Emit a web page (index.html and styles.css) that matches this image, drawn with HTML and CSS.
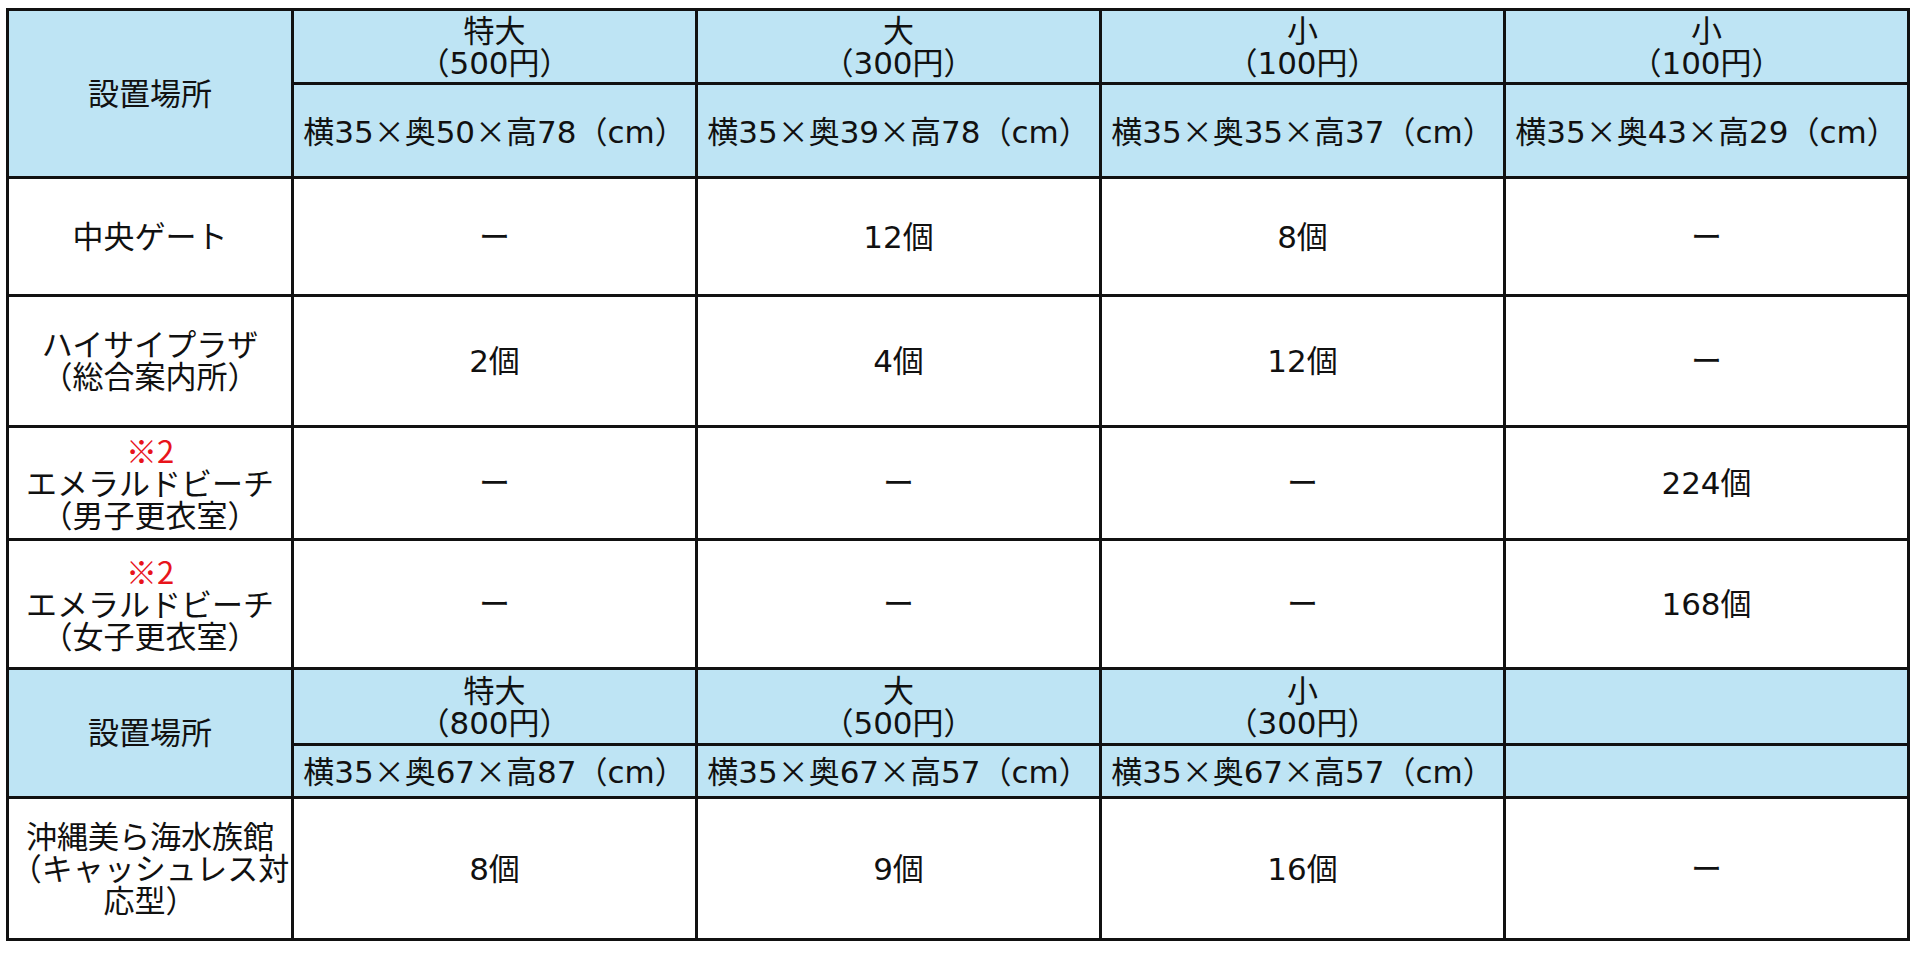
FILE: index.html
```html
<!DOCTYPE html>
<html lang="ja">
<head>
<meta charset="utf-8">
<title>コインロッカー設置場所</title>
<link rel="stylesheet" href="styles.css">
</head>
<body>
<table class="locker">
  <colgroup>
    <col class="c-place">
    <col class="c-size">
    <col class="c-size">
    <col class="c-size">
    <col class="c-size">
  </colgroup>
  <tbody>
    <tr class="h-a">
      <th class="hd" rowspan="2">設置場所</th>
      <th class="hd price">特大<br>（500円）</th>
      <th class="hd price">大<br>（300円）</th>
      <th class="hd price">小<br>（100円）</th>
      <th class="hd price">小<br>（100円）</th>
    </tr>
    <tr class="h-b">
      <th class="hd">横35<span class="x">×</span>奥50<span class="x">×</span>高78（cm）</th>
      <th class="hd">横35<span class="x">×</span>奥39<span class="x">×</span>高78（cm）</th>
      <th class="hd">横35<span class="x">×</span>奥35<span class="x">×</span>高37（cm）</th>
      <th class="hd">横35<span class="x">×</span>奥43<span class="x">×</span>高29（cm）</th>
    </tr>
    <tr class="r1">
      <td>中央ゲート</td>
      <td>ー</td>
      <td>12個</td>
      <td>8個</td>
      <td>ー</td>
    </tr>
    <tr class="r2">
      <td>ハイサイプラザ<br>（総合案内所）</td>
      <td>2個</td>
      <td>4個</td>
      <td>12個</td>
      <td>ー</td>
    </tr>
    <tr class="r3">
      <td><span class="note">※2</span><br>エメラルドビーチ<br>（男子更衣室）</td>
      <td>ー</td>
      <td>ー</td>
      <td>ー</td>
      <td>224個</td>
    </tr>
    <tr class="r4">
      <td><span class="note">※2</span><br>エメラルドビーチ<br>（女子更衣室）</td>
      <td>ー</td>
      <td>ー</td>
      <td>ー</td>
      <td>168個</td>
    </tr>
    <tr class="h2-a">
      <th class="hd" rowspan="2">設置場所</th>
      <th class="hd price">特大<br>（800円）</th>
      <th class="hd price">大<br>（500円）</th>
      <th class="hd price">小<br>（300円）</th>
      <th class="hd"></th>
    </tr>
    <tr class="h2-b">
      <th class="hd">横35<span class="x">×</span>奥67<span class="x">×</span>高87（cm）</th>
      <th class="hd">横35<span class="x">×</span>奥67<span class="x">×</span>高57（cm）</th>
      <th class="hd">横35<span class="x">×</span>奥67<span class="x">×</span>高57（cm）</th>
      <th class="hd"></th>
    </tr>
    <tr class="r5">
      <td>沖縄美ら海水族館<br>（キャッシュレス対<br>応型）</td>
      <td>8個</td>
      <td>9個</td>
      <td>16個</td>
      <td>ー</td>
    </tr>
  </tbody>
</table>
</body>
</html>
```
FILE: styles.css
```css
html, body {
  margin: 0;
  padding: 0;
  background: #ffffff;
}

body {
  font-family: "DejaVu Sans", "Noto Sans CJK JP", sans-serif;
  color: #111111;
}

.locker {
  margin: 8px 0 0 6px;
  width: 1904px;
  table-layout: fixed;
  border-collapse: collapse;
  border: 3px solid #111111;
  font-size: 31px;
  line-height: 32px;
}

.c-place { width: 285px; }
.c-size { width: 404px; }

.locker th,
.locker td {
  border: 3px solid #111111;
  padding: 0;
  text-align: center;
  vertical-align: middle;
  font-weight: 400;
  white-space: nowrap;
  overflow: hidden;
}

.locker .hd {
  background: #bee4f4;
}

.locker .price {
  text-spacing-trim: space-all;
}

.h-a { height: 74px; }
.h-b { height: 94px; }
.r1 { height: 118px; }
.r2 { height: 131px; }
.r3 { height: 113px; }
.r4 { height: 129px; }
.h2-a { height: 76px; }
.h2-b { height: 53px; }
.r5 { height: 142px; }

.x {
  font-family: "Noto Sans CJK JP", sans-serif;
}

.note {
  font-family: "Noto Sans CJK JP", sans-serif;
  color: #e8141b;
}
```
